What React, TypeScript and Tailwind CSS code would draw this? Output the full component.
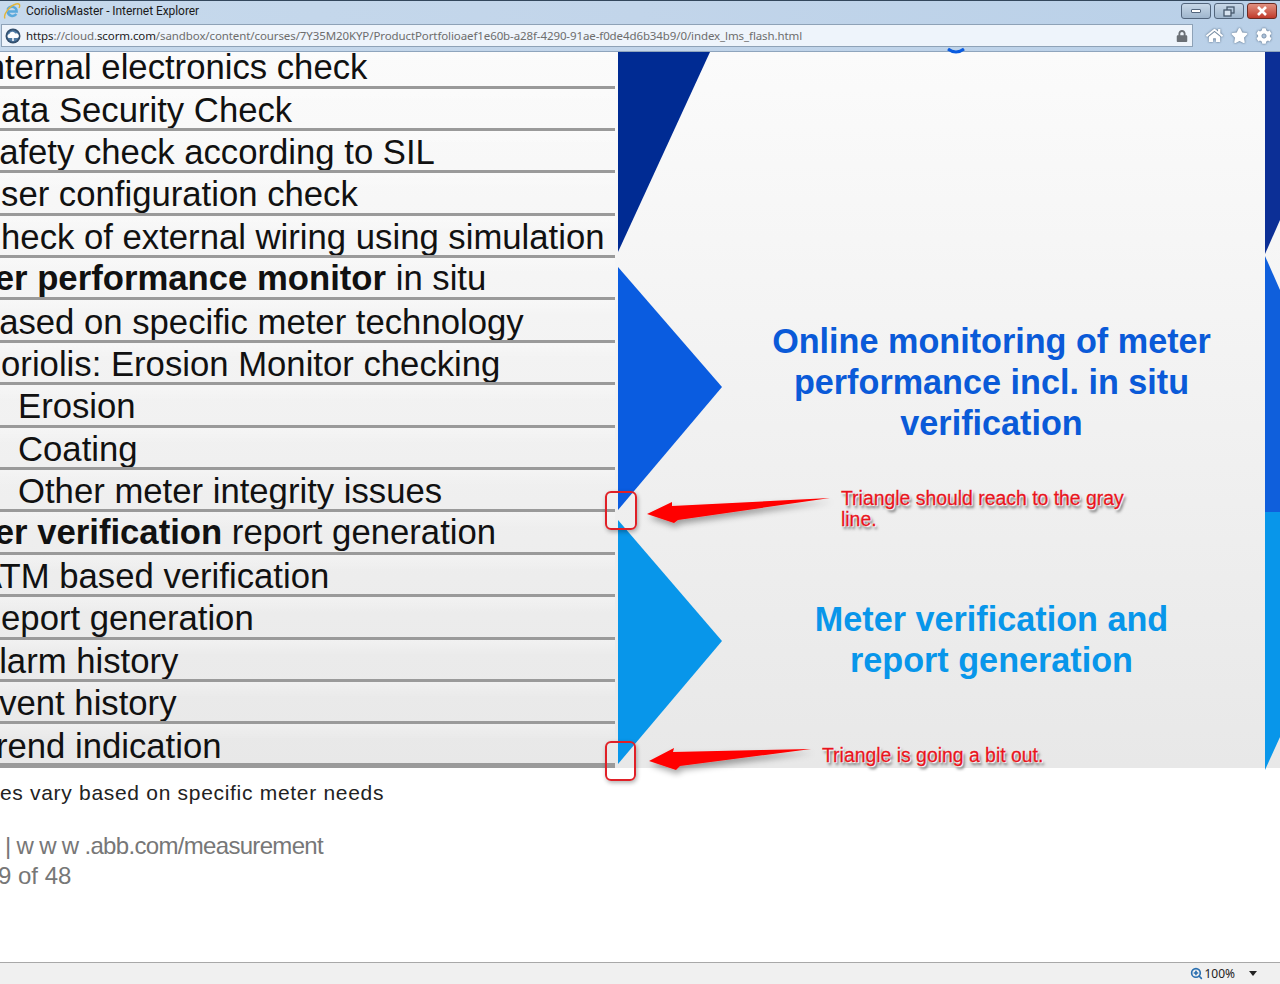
import { FaHome, FaStar, FaCog, FaLock } from 'react-icons/fa';
import { ZoomIn } from 'lucide-react';

// rows of the slide's checklist, the slide runs off the left edge of the window
const rows = [
  { text: 'Internal electronics check', first: true },
  { text: 'Data Security Check' },
  { text: 'Safety check according to SIL' },
  { text: 'User configuration check' },
  { text: 'Check of external wiring using simulation' },
  { bold: 'Meter performance monitor', rest: ' in situ' },
  { text: 'Based on specific meter technology' },
  { text: 'Coriolis: Erosion Monitor checking' },
  { text: 'Erosion', sub: true },
  { text: 'Coating', sub: true },
  { text: 'Other meter integrity issues', sub: true },
  { bold: 'Meter verification', rest: ' report generation' },
  { text: 'ATM based verification', atm: true },
  { text: 'Report generation' },
  { text: 'Alarm history' },
  { text: 'Event history' },
  { text: 'Trend indication', last: true },
];

function ChecklistRow({ row }: { row: (typeof rows)[number] }) {
  return (
    <div
      className={`flex items-center overflow-hidden whitespace-nowrap border-[#9a9a9a] bg-gradient-to-b from-white/30 to-transparent to-40% text-[34.7px] text-[#111111] ${
        row.first ? 'h-[36.5px] border-b-[3px] pb-[4px]' : row.last ? 'h-[43.5px] border-b-[5px] pt-[5px]' : 'h-[42.4px] border-b-[3px] pt-[3px]'
      }`}
    >
      {row.bold ? (
        <span className="ml-[-65px] mt-[-3px]">
          <b>{row.bold}</b>
          {row.rest}
        </span>
      ) : row.sub ? (
        <span className="ml-[18px]">{row.text}</span>
      ) : (
        <span className={row.atm ? 'ml-[-21px]' : 'ml-[-24px]'}>{row.text}</span>
      )}
    </div>
  );
}

function IeLogo() {
  return (
    <svg width="18" height="18" viewBox="0 0 18 18" fill="none">
      <path d="M4.5 9.5h9.2a4.8 4.8 0 0 0-9.2-1.8M13.4 12a5 5 0 0 1-8.9-2.5" stroke="#5aa9dc" strokeWidth="2.4" />
      <path d="M2 16.5C0 13 6 4 13 2c3.5-1 4.5 1 3 4" stroke="#e3b53a" strokeWidth="1.4" />
    </svg>
  );
}

function SiteIcon() {
  return (
    <svg width="16" height="16" viewBox="0 0 16 16">
      <circle cx="8" cy="8" r="7.5" fill="#33506e" />
      <circle cx="8" cy="8" r="5.8" fill="#4f7aa3" />
      <path d="M3.5 10a2.2 2.2 0 0 1 .8-4 3.2 3.2 0 0 1 6-.5 2.4 2.4 0 0 1 2 4.5z" fill="#ffffff" />
      <path d="M8 9v4" stroke="#ffffff" strokeWidth="1.5" />
    </svg>
  );
}

function WindowButton({ className, children }: { className: string; children: React.ReactNode }) {
  return (
    <div className={`flex h-[16px] w-[30px] items-center justify-center rounded-[3px] border ${className}`}>
      {children}
    </div>
  );
}

const annotationText =
  "text-[19.4px] leading-[21px] text-[#e8141c] [-webkit-text-stroke:0.3px_#e8141c] [text-shadow:0_0_1px_#fff,0_0_2px_#fff,1px_1px_1px_#fff,2px_3px_3px_#555]";

export default function App() {
  return (
    <div className="flex h-[984px] w-[1280px] flex-col overflow-hidden bg-white font-['Liberation_Sans',sans-serif]">
      {/* IE window chrome */}
      <div className="flex h-[52px] shrink-0 flex-col border-t border-b border-t-[#33475c] border-b-[#8fa5bd] bg-gradient-to-r from-[#c6d9ec] via-[#c2d5ea] to-[#b9d0e8]">
        <div className="flex h-[20px] items-center pl-[3px] pr-[3px]">
          <IeLogo />
          <span className="ml-[5px] font-['Roboto',sans-serif] text-[12px] tracking-[-0.06px] text-[#1a1a1a]">CoriolisMaster - Internet Explorer</span>
          <div className="ml-auto flex gap-[3px]">
            <WindowButton className="border-[#52657c] bg-gradient-to-b from-[#c8d8e8] to-[#9fb6cd]">
              <div className="h-[4px] w-[10px] rounded-[1px] border border-[#52657c] bg-white" />
            </WindowButton>
            <WindowButton className="border-[#52657c] bg-gradient-to-b from-[#c8d8e8] to-[#9fb6cd]">
              <svg width="12" height="11" viewBox="0 0 12 11" fill="none" stroke="#46586c" strokeWidth="1.3">
                <rect x="4" y="1" width="7" height="6" />
                <rect x="1" y="4" width="7" height="6" fill="#d7e3ef" />
              </svg>
            </WindowButton>
            <WindowButton className="border-[#6b2b22] bg-gradient-to-b from-[#e09080] to-[#c0392b]">
              <svg width="12" height="10" viewBox="0 0 12 10" stroke="#ffffff" strokeWidth="2.6">
                <path d="M2 1l8 8M10 1l-8 8" />
              </svg>
            </WindowButton>
          </div>
        </div>
        <div className="mt-[3px] flex h-[23px] items-center pl-[1px] pr-[7px]">
          <div className="flex h-[23px] w-[1192px] items-center border border-[#8ea2b7] bg-[#eef4fb] pl-[3px] pr-[4px]">
            <SiteIcon />
            <span className="ml-[5px] mt-[1px] font-['Noto_Sans',sans-serif] text-[11.5px] tracking-[-0.1px] whitespace-nowrap text-[#6d6d6d]">
              <span className="text-[#222222]">https</span>://cloud.<span className="text-[#222222]">scorm.com</span>
              /sandbox/content/courses/7Y35M20KYP/ProductPortfolioaef1e60b-a28f-4290-91ae-f0de4d6b34b9/0/index_lms_flash.html
            </span>
            <FaLock size={12} className="ml-auto text-[#6a6f75]" />
          </div>
          <div className="ml-[13px] flex items-center gap-[8px]">
            <FaHome size={17} className="text-white drop-shadow-[0_0_1px_#4a6078]" />
            <FaStar size={17} className="text-white drop-shadow-[0_0_1px_#4a6078]" />
            <FaCog size={16} className="text-white drop-shadow-[0_0_1px_#4a6078]" />
          </div>
        </div>
      </div>

      {/* slide */}
      <div className="flex h-[716px] shrink-0 bg-gradient-to-b from-[#fbfbfb] to-[#e8e8e8]">
        <div className="w-[615px] shrink-0 overflow-hidden">
          {rows.map((row, i) => (
            <ChecklistRow key={i} row={row} />
          ))}
        </div>
        <div className="relative ml-[3px] flex-1">
          <svg className="absolute left-0 top-0 overflow-visible" width="662" height="716" viewBox="618 52 662 716">
            <polygon points="618,52 710,52 618,252" fill="#002b93" />
            <polygon points="618,267 722,387 618,510" fill="#0a5ce0" />
            <polygon points="618,520 722,641 618,764" fill="#0896ea" />
            <polygon points="1265,52 1280,52 1280,220 1265,254" fill="#0c2f96" />
            <polygon points="1265,256 1280,290 1280,512 1265,512" fill="#0f5fdc" />
            <polygon points="1265,512 1280,512 1280,737 1265,770" fill="#0896ea" />
            <path d="M948 49q8 6 16 0" fill="none" stroke="#0a5ce0" strokeWidth="3" />
          </svg>
          <div className="relative ml-[103.5px] w-[540px] pt-[269px] text-center text-[34.2px] leading-[41px] font-bold">
            <div className="text-[#0a5ad8]">
              Online monitoring of meter
              <br />
              performance incl. in situ
              <br />
              verification
            </div>
            <div className="mt-[155px] text-[#0896ea]">
              Meter verification and
              <br />
              report generation
            </div>
          </div>
        </div>
      </div>

      {/* below the slide */}
      <div className="flex-1 overflow-hidden whitespace-nowrap">
        <div className="ml-[-65px] mt-[9px] text-[21px] tracking-[0.7px] text-[#222222]">Features vary based on specific meter needs</div>
        <div className="ml-[5px] mt-[22px] text-[24px] leading-[30px] text-[#777777]">
          <div className="tracking-[-0.68px]">| w w w .abb.com/measurement</div>
          <div className="ml-[-7px]">9 of 48</div>
        </div>
      </div>

      {/* status bar */}
      <div className="flex h-[22px] shrink-0 items-center border-t border-[#a8a8a8] bg-[#f0f0f0] pr-[23px] font-['Noto_Sans',sans-serif]">
        <ZoomIn size={13} strokeWidth={3} className="ml-auto text-[#2a6fb0]" />
        <span className="ml-[1px] text-[12px] text-[#222222]">100%</span>
        <svg className="ml-[14px]" width="8" height="5" viewBox="0 0 8 5">
          <polygon points="0,0 8,0 4,5" fill="#222222" />
        </svg>
      </div>

      {/* review markup drawn over the page */}
      <svg className="pointer-events-none absolute left-0 top-0" width="1280" height="984">
        <defs>
          <filter id="arrowShadow" x="-10%" y="-50%" width="120%" height="250%">
            <feDropShadow dx="2" dy="4" stdDeviation="3" floodColor="#000000" floodOpacity="0.35" />
          </filter>
        </defs>
        <g fill="#ff0000" filter="url(#arrowShadow)">
          <polygon points="647,514 672,502 672,506 830,498 678,520 674,523" />
          <polygon points="649,761 674,748 673,752 811,749 680,766 676,770" />
        </g>
      </svg>
      <div className="absolute left-[605px] top-[491px] h-[39px] w-[32px] rounded-[6px] border-2 border-[#e02027] shadow-[1px_2px_4px_rgba(0,0,0,0.3)]" />
      <div className="absolute left-[605px] top-[741px] h-[40px] w-[31px] rounded-[6px] border-2 border-[#e02027] shadow-[1px_2px_4px_rgba(0,0,0,0.3)]" />
      <div className={`absolute left-[841px] top-[488px] w-[295px] ${annotationText}`}>
        Triangle should reach to the gray line.
      </div>
      <div className={`absolute left-[822px] top-[745px] whitespace-nowrap ${annotationText}`}>
        Triangle is going a bit out.
      </div>
    </div>
  );
}
